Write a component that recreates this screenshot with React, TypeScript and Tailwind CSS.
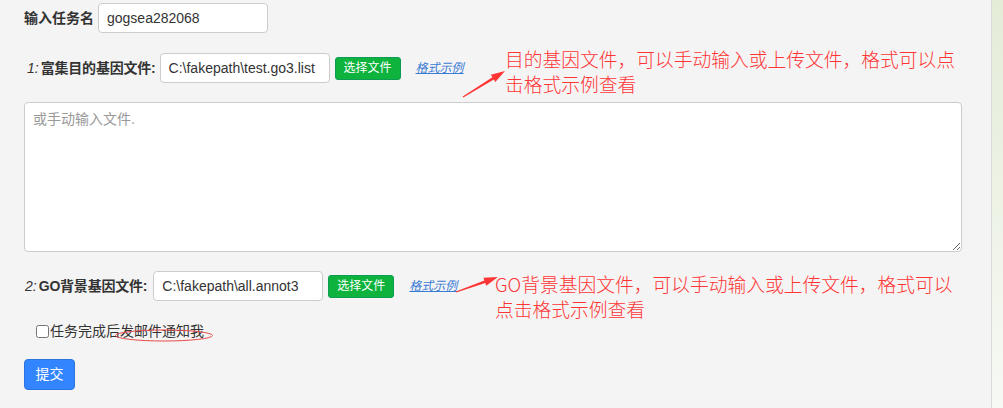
import React from "react";

function arrowPoints(tx: number, ty: number, px: number, py: number) {
  const dx = px - tx;
  const dy = py - ty;
  const len = Math.hypot(dx, dy);
  const ux = dx / len;
  const uy = dy / len;
  const nx = -uy;
  const ny = ux;
  const headLen = 14;
  const headW = 4.2;
  const bx = px - ux * headLen;
  const by = py - uy * headLen;
  const pts: [number, number][] = [
    [tx + nx * 0.5, ty + ny * 0.5],
    [bx + nx * 1.3, by + ny * 1.3],
    [bx + nx * headW, by + ny * headW],
    [px, py],
    [bx - nx * headW, by - ny * headW],
    [bx - nx * 1.3, by - ny * 1.3],
    [tx - nx * 0.5, ty - ny * 0.5],
  ];
  return pts.map((p) => `${p[0].toFixed(1)},${p[1].toFixed(1)}`).join(" ");
}

const latin = "font-['Liberation_Sans','Noto_Sans_CJK_SC',sans-serif]";

function FileRow({
  num,
  label,
  value,
  inputGap,
}: {
  num: string;
  label: string;
  value: string;
  inputGap: string;
}) {
  return (
    <div className="flex items-center h-[30px]">
      <span className="italic text-[14px] text-[#333] mr-[2px]">{num}</span>
      <span className="font-bold text-[14px] text-[#333] tracking-[-0.2px]">{label}</span>
      <div className={`${inputGap} w-[170px] h-[30px] border border-[#ccc] rounded-[4px] bg-white pl-2 flex items-center text-[14px] text-[#333]`}>
        {value}
      </div>
      <div className="ml-[5px] h-[23px] px-[8px] rounded-[3px] bg-[#0db33d] border border-[#0c9a55] text-white text-[12px] flex items-center">
        选择文件
      </div>
      <a className="ml-[15px] text-[12px] italic underline text-[#3a7bd5]">格式示例</a>
    </div>
  );
}

export default function App() {
  return (
    <div className={`relative w-[1003px] h-[408px] flex overflow-hidden ${latin}`}>
      <div className="flex-1 bg-[#f4f4f4] pl-[24px] pt-[3px]">
        <div className="flex items-center h-[30px]">
          <span className="font-bold text-[14px] text-[#333]">输入任务名</span>
          <div className="ml-[4px] w-[170px] h-[30px] border border-[#ccc] rounded-[4px] bg-white pl-2 flex items-center text-[14px] text-[#333]">
            gogsea282068
          </div>
        </div>

        <div className="mt-[20px] pl-[3px]">
          <FileRow num="1:" label="富集目的基因文件:" value="C:\fakepath\test.go3.list" inputGap="ml-[4px]" />
        </div>

        <textarea
          className="mt-[19px] block w-[938px] h-[150px] border border-[#ccc] rounded-[4px] bg-white px-2 py-[6px] text-[14px] text-[#555] placeholder:text-[#999] outline-none"
          placeholder="或手动输入文件."
        />

        <div className="mt-[19px] pl-[1px]">
          <FileRow num="2:" label="GO背景基因文件:" value="C:\fakepath\all.annot3" inputGap="ml-[6px]" />
        </div>

        <label className="mt-[20px] ml-[12px] flex items-center h-[20px] text-[14px] text-[#333]">
          <input type="checkbox" className="m-0 w-[13px] h-[13px]" />
          <span className="ml-[1px]">任务完成后发邮件通知我</span>
        </label>

        <button className="mt-[18px] w-[51px] h-[31px] rounded-[4px] bg-[#3385ff] border border-[#2b74e0] text-white text-[14px] flex items-center justify-center">
          提交
        </button>
      </div>
      <div className="w-[12px] border-l border-[#d9d9d9] bg-gradient-to-b from-[#e4ecd8] to-[#f7f9f4]" />

      <div className="absolute left-[505px] top-[46px] text-[18.75px] leading-[25px] font-light text-[#ff3535] font-['Noto_Sans_CJK_SC',sans-serif]">
        <div>目的基因文件，可以手动输入或上传文件，格式可以点</div>
        <div>击格式示例查看</div>
      </div>
      <div className="absolute left-[495px] top-[271px] text-[18.75px] leading-[25px] font-light text-[#ff3535] font-['Noto_Sans_CJK_SC',sans-serif]">
        <div>GO背景基因文件，可以手动输入或上传文件，格式可以</div>
        <div>点击格式示例查看</div>
      </div>

      <svg className="absolute left-0 top-0 pointer-events-none" width="1003" height="408">
        <polygon points={arrowPoints(463, 97, 505, 71)} fill="#ff3535" />
        <polygon points={arrowPoints(456, 292, 498, 277)} fill="#ff3535" />
        <ellipse cx="164" cy="335.5" rx="48.5" ry="5.5" fill="none" stroke="#e84a4a" strokeWidth="1" />
      </svg>
    </div>
  );
}
